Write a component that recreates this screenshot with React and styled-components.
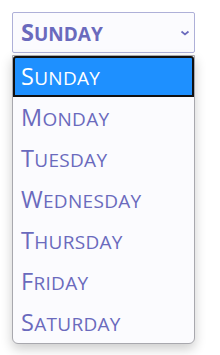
import React from "react";
import styled, { createGlobalStyle } from "styled-components";

const Global = createGlobalStyle`
  html, body { margin: 0; padding: 0; background: #ffffff; }
  body { width: 220px; height: 355px; overflow: hidden; font-family: "Open Sans", sans-serif; }
`;

const Wrap = styled.div`
  padding: 12px 0 0 12px;
  width: 183px;
  display: flex;
  flex-direction: column;
  gap: 2px;
`;

const SelectBox = styled.div`
  box-sizing: border-box;
  height: 41px;
  border: 1px solid #aeb0d8;
  border-radius: 2px;
  background: #fbfbfe;
  display: flex;
  align-items: center;
  justify-content: space-between;
  padding: 0 4px 0 8px;
`;

const Text = styled.span`
  font-family: "Open Sans", sans-serif;
  font-weight: ${(p) => (p.$bold ? 700 : 400)};
  text-transform: uppercase;
  letter-spacing: ${(p) => (p.$bold ? "0" : "0.3px")};
  color: inherit;
  line-height: 1;
  white-space: nowrap;
`;

const Cap = styled.span`
  font-size: 23.5px;
`;

const Rest = styled.span`
  font-size: 19px;
`;

const Label = styled.div`
  color: #6a6abd;
  display: flex;
  align-items: baseline;
`;

const List = styled.ul`
  list-style: none;
  margin: 0;
  padding: 0;
  box-sizing: border-box;
  border: 1px solid #a8a8ae;
  border-radius: 0 0 6px 6px;
  background: #fbfbfe;
  box-shadow: 0 5px 12px rgba(0, 0, 0, 0.2);
  overflow: hidden;
`;

const Option = styled.li`
  box-sizing: border-box;
  height: 41px;
  display: flex;
  align-items: center;
  color: ${(p) => (p.$selected ? "#ffffff" : "#6a6abd")};
  background: ${(p) => (p.$selected ? "#1e90ff" : "transparent")};
  border: ${(p) => (p.$selected ? "2px solid #111111" : "none")};
  border-radius: ${(p) => (p.$selected ? "3px 3px 0 0" : "0")};
  padding-left: ${(p) => (p.$selected ? "6px" : "8px")};
`;

const days = ["Sunday", "Monday", "Tuesday", "Wednesday", "Thursday", "Friday", "Saturday"];

function SmallCaps({ word, bold }) {
  return (
    <Text $bold={bold}>
      <Cap>{word[0]}</Cap>
      <Rest>{word.slice(1)}</Rest>
    </Text>
  );
}

export default function App() {
  return (
    <>
      <Global />
      <Wrap>
        <SelectBox>
          <Label>
            <SmallCaps word="Sunday" bold />
          </Label>
          <svg width="10" height="6" viewBox="0 0 10 6">
            <path d="M1.5 1.5 L5 4.5 L8.5 1.5" fill="none" stroke="#6a6abd" strokeWidth="1.7" />
          </svg>
        </SelectBox>
        <List>
          {days.map((d, i) => (
            <Option key={d} $selected={i === 0}>
              <SmallCaps word={d} />
            </Option>
          ))}
        </List>
      </Wrap>
    </>
  );
}
